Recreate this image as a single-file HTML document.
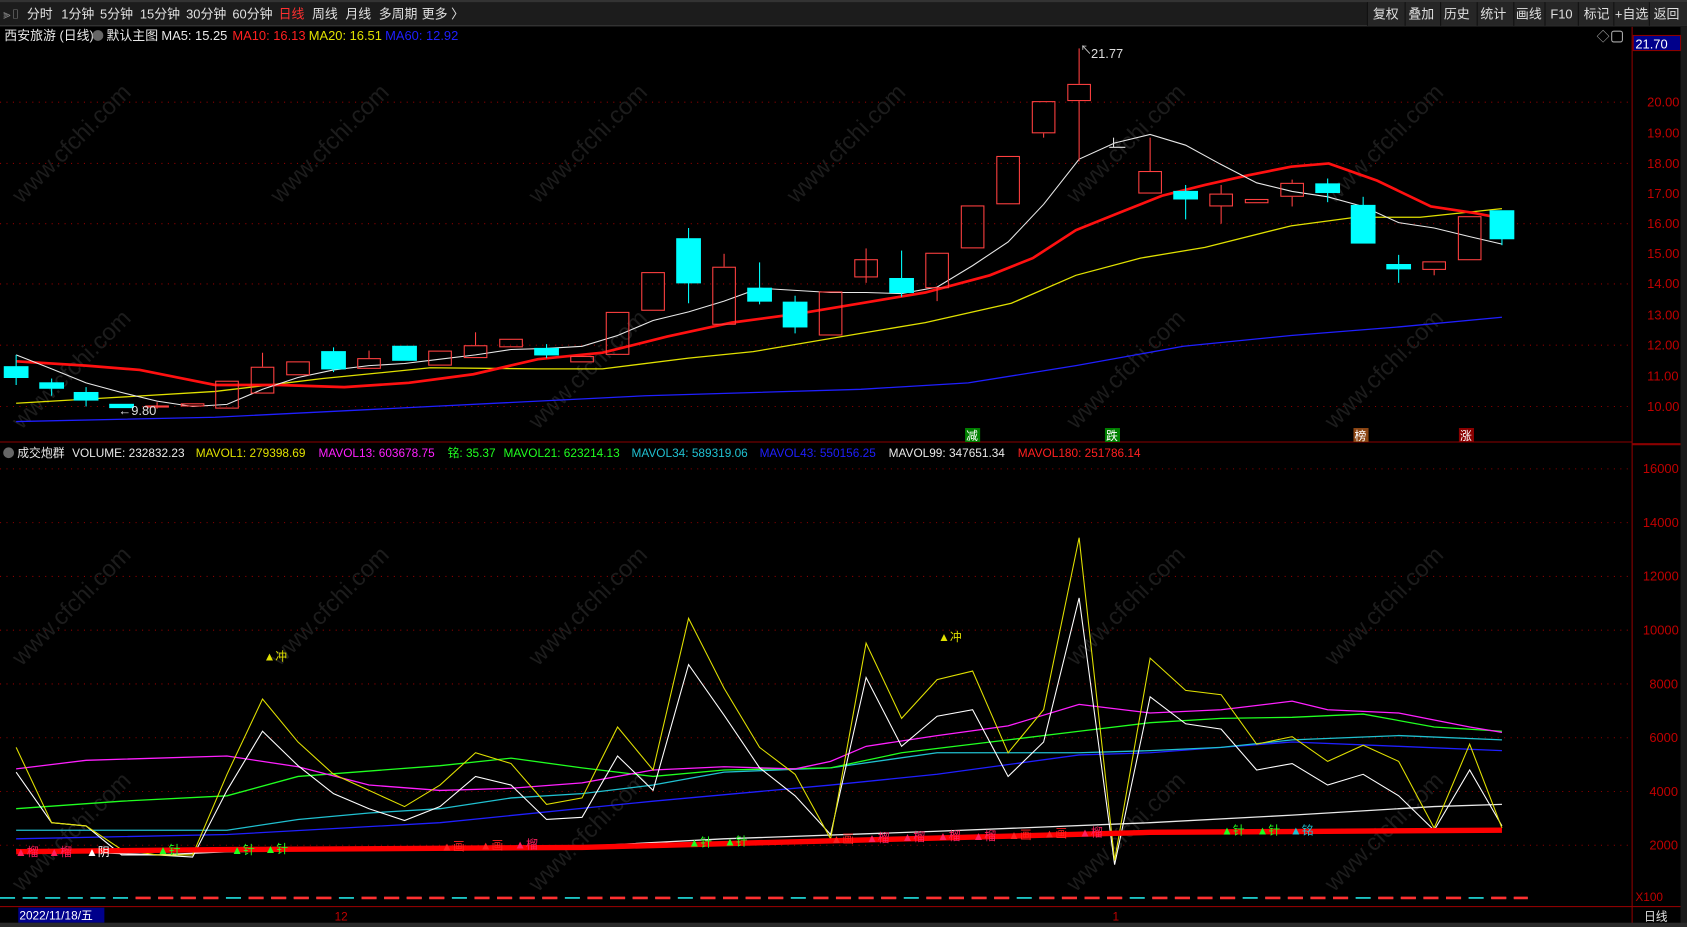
<!DOCTYPE html>
<html><head><meta charset="utf-8"><style>
html,body{margin:0;padding:0;background:#000;width:1687px;height:927px;overflow:hidden}
svg{display:block}
text{font-family:"Liberation Sans","Noto Sans CJK SC",sans-serif}
</style></head><body>
<svg width="1687" height="927" viewBox="0 0 1568 862" preserveAspectRatio="none" xmlns="http://www.w3.org/2000/svg">
<rect width="1568" height="862" fill="#000"/>
<rect x="0" y="0" width="1568" height="24" fill="#1c1c1c"/>
<rect x="0" y="0" width="1568" height="2" fill="#333"/>
<line x1="0" y1="24" x2="1568" y2="24" stroke="#3a3a3a"/>
<g font-size="12" fill="#e0e0e0">
<text x="3" y="17" fill="#888">⫸▯</text>
<text x="25" y="17">分时</text><text x="57" y="17">1分钟</text><text x="93" y="17">5分钟</text>
<text x="130" y="17">15分钟</text><text x="173" y="17">30分钟</text><text x="216" y="17">60分钟</text>
<text x="259" y="17" fill="#ff3030">日线</text><text x="290" y="17">周线</text><text x="321" y="17">月线</text>
<text x="352" y="17">多周期</text><text x="392" y="17">更多 〉</text>
</g>
<g font-size="12" fill="#e0e0e0">
<rect x="1271" y="2" width="297" height="22" fill="#262626"/>
<g stroke="#111"><line x1="1271" y1="2" x2="1271" y2="24"/><line x1="1306" y1="2" x2="1306" y2="24"/><line x1="1339" y1="2" x2="1339" y2="24"/><line x1="1373" y1="2" x2="1373" y2="24"/><line x1="1407" y1="2" x2="1407" y2="24"/><line x1="1436" y1="2" x2="1436" y2="24"/><line x1="1467" y1="2" x2="1467" y2="24"/><line x1="1500" y1="2" x2="1500" y2="24"/><line x1="1533" y1="2" x2="1533" y2="24"/></g>
<text x="1276" y="17">复权</text><text x="1309" y="17">叠加</text><text x="1342" y="17">历史</text><text x="1376" y="17">统计</text>
<text x="1409" y="17">画线</text><text x="1441" y="17">F10</text><text x="1472" y="17">标记</text><text x="1501" y="17">+自选</text><text x="1537" y="17">返回</text>
</g>
<g font-size="12">
<text x="4" y="37" fill="#e8e8e8">西安旅游 (日线)</text>
<circle cx="91" cy="33" r="5" fill="#666"/>
<text x="99" y="37" fill="#e8e8e8">默认主图</text>
<text x="150" y="37" fill="#e8e8e8">MA5: 15.25</text>
<text x="216" y="37" fill="#ff2020">MA10: 16.13</text>
<text x="287" y="37" fill="#e0e000">MA20: 16.51</text>
<text x="358" y="37" fill="#1f1fff">MA60: 12.92</text>
<text x="1484" y="38" fill="#aaa">◇</text>
<rect x="1498" y="29" width="10" height="10" fill="none" stroke="#aaa" rx="2"/>
</g>
<line x1="1517" y1="25" x2="1517" y2="862" stroke="#8b0000"/>
<rect x="1562" y="25" width="6" height="837" fill="#1a1a1a"/>
<line x1="0" y1="411" x2="1517" y2="411" stroke="#8b0000"/>
<line x1="1517" y1="413" x2="1562" y2="413" stroke="#8b0000" stroke-width="2"/>
<rect x="1518" y="33" width="44" height="14" fill="#00008b" stroke="#8b0000"/>
<text x="1520" y="45" font-size="12" fill="#fff">21.70</text>
<g font-size="12" fill="#c00000">
<text x="1531" y="99">20.00</text><text x="1531" y="128">19.00</text><text x="1531" y="156">18.00</text><text x="1531" y="184">17.00</text><text x="1531" y="212">16.00</text><text x="1531" y="240">15.00</text><text x="1531" y="268">14.00</text><text x="1531" y="297">13.00</text><text x="1531" y="325">12.00</text><text x="1531" y="354">11.00</text><text x="1531" y="382">10.00</text>
<text x="1527" y="440">16000</text><text x="1527" y="490">14000</text><text x="1527" y="540">12000</text><text x="1527" y="590">10000</text><text x="1533" y="640">8000</text><text x="1533" y="690">6000</text><text x="1533" y="740">4000</text><text x="1533" y="790">2000</text>
</g>
<g stroke="#8b0000" stroke-dasharray="1,5">
<line x1="0" y1="95" x2="1515" y2="95"/><line x1="0" y1="152" x2="1515" y2="152"/><line x1="0" y1="208" x2="1515" y2="208"/><line x1="0" y1="264" x2="1515" y2="264"/><line x1="0" y1="321" x2="1515" y2="321"/><line x1="0" y1="378" x2="1515" y2="378"/>
<line x1="0" y1="436" x2="1515" y2="436"/><line x1="0" y1="486" x2="1515" y2="486"/><line x1="0" y1="536" x2="1515" y2="536"/><line x1="0" y1="586" x2="1515" y2="586"/><line x1="0" y1="636" x2="1515" y2="636"/><line x1="0" y1="686" x2="1515" y2="686"/><line x1="0" y1="736" x2="1515" y2="736"/><line x1="0" y1="786" x2="1515" y2="786"/>
</g>
<g font-size="22" fill="#1c1c1c" font-family="Liberation Sans">
<text transform="translate(20,190) rotate(-45)">www.cfchi.com</text>
<text transform="translate(260,190) rotate(-45)">www.cfchi.com</text>
<text transform="translate(500,190) rotate(-45)">www.cfchi.com</text>
<text transform="translate(740,190) rotate(-45)">www.cfchi.com</text>
<text transform="translate(1000,190) rotate(-45)">www.cfchi.com</text>
<text transform="translate(1240,190) rotate(-45)">www.cfchi.com</text>
<text transform="translate(20,400) rotate(-45)">www.cfchi.com</text>
<text transform="translate(500,400) rotate(-45)">www.cfchi.com</text>
<text transform="translate(1000,400) rotate(-45)">www.cfchi.com</text>
<text transform="translate(1240,400) rotate(-45)">www.cfchi.com</text>
<text transform="translate(20,620) rotate(-45)">www.cfchi.com</text>
<text transform="translate(260,620) rotate(-45)">www.cfchi.com</text>
<text transform="translate(500,620) rotate(-45)">www.cfchi.com</text>
<text transform="translate(1000,620) rotate(-45)">www.cfchi.com</text>
<text transform="translate(1240,620) rotate(-45)">www.cfchi.com</text>
<text transform="translate(20,830) rotate(-45)">www.cfchi.com</text>
<text transform="translate(500,830) rotate(-45)">www.cfchi.com</text>
<text transform="translate(1000,830) rotate(-45)">www.cfchi.com</text>
<text transform="translate(1240,830) rotate(-45)">www.cfchi.com</text>
</g>
<polyline fill="none" stroke="#1f1fff" stroke-width="1.2" points="15,392 200,388 400,378 600,368 800,362 900,356 1000,340 1100,322 1200,312 1300,304 1396,295"/>
<polyline fill="none" stroke="#e0e000" stroke-width="1.2" points="15,375 100,370 200,364 300,352 400,342 500,343 560,343 640,333 700,327 800,310 860,300 940,282 1000,256 1060,240 1120,230 1200,210 1260,202 1320,202 1396,194"/>
<polyline fill="none" stroke="#ff1010" stroke-width="2.5" points="15,336 80,340 130,344 200,358 260,358 320,360 380,356 440,348 500,334 560,328 620,313 680,300 740,292 800,282 860,272 920,256 960,240 1000,214 1040,198 1080,182 1120,172 1160,163 1200,155 1235,152 1280,168 1330,192 1370,198 1396,203"/>
<polyline fill="none" stroke="#e8e8e8" stroke-width="1" points="15,330 48,343 80,356 113,365 146,373 179,378 211,376 244,362 277,351 310,344 343,340 376,338 409,334 442,330 475,325 508,324 541,322 574,312 607,298 640,290 673,280 706,268 739,270 772,272 805,272 838,273 871,267 904,247 937,225 970,190 1003,148 1036,133 1069,125 1102,135 1135,153 1168,170 1201,178 1234,183 1267,192 1300,207 1333,212 1366,220 1396,227"/>
<g stroke-width="1">
<g fill="#00ffff" stroke="#00ffff">
<line x1="15" y1="330" x2="15" y2="358"/><rect x="4" y="341" width="22" height="10"/>
<rect x="37" y="356" width="22" height="5"/><line x1="48" y1="352" x2="48" y2="368"/>
<line x1="80" y1="360" x2="80" y2="378"/><rect x="69" y="365" width="22" height="7"/>
<rect x="102" y="376" width="22" height="3"/>
<line x1="310" y1="323" x2="310" y2="346"/><rect x="299" y="327" width="22" height="16"/>
<rect x="365" y="322" width="22" height="13"/>
<rect x="497" y="324" width="22" height="6"/><line x1="508" y1="320" x2="508" y2="333"/>
<line x1="640" y1="212" x2="640" y2="282"/><rect x="629" y="222" width="22" height="41"/>
<line x1="706" y1="244" x2="706" y2="283"/><rect x="695" y="268" width="22" height="12"/>
<line x1="739" y1="275" x2="739" y2="310"/><rect x="728" y="281" width="22" height="23"/>
<line x1="838" y1="233" x2="838" y2="276"/><rect x="827" y="259" width="22" height="13"/>
<line x1="1102" y1="172" x2="1102" y2="204"/><rect x="1091" y="178" width="22" height="7"/>
<line x1="1234" y1="166" x2="1234" y2="188"/><rect x="1223" y="171" width="22" height="8"/>
<line x1="1267" y1="183" x2="1267" y2="226"/><rect x="1256" y="191" width="22" height="35"/>
<line x1="1300" y1="237" x2="1300" y2="263"/><rect x="1289" y="246" width="22" height="4"/>
<line x1="1396" y1="196" x2="1396" y2="228"/><rect x="1385" y="196" width="22" height="26"/>
</g>
<g fill="none" stroke="#ff4040">
<line x1="146" y1="374" x2="146" y2="380"/><rect x="135.5" y="377.5" width="21" height="1"/>
<rect x="168.5" y="375.5" width="21" height="2"/>
<rect x="200.5" y="354.5" width="21" height="25"/>
<line x1="244" y1="328" x2="244" y2="341"/><rect x="233.5" y="341.5" width="21" height="24"/>
<rect x="266.5" y="336.5" width="21" height="12"/>
<line x1="343" y1="326" x2="343" y2="333"/><rect x="332.5" y="333.5" width="21" height="9"/>
<rect x="398.5" y="326.5" width="21" height="13"/>
<line x1="442" y1="309" x2="442" y2="321"/><rect x="431.5" y="321.5" width="21" height="11"/>
<rect x="464.5" y="315.5" width="21" height="7"/>
<rect x="530.5" y="331.5" width="21" height="5"/>
<rect x="563.5" y="290.5" width="21" height="39"/>
<rect x="596.5" y="253.5" width="21" height="35"/>
<line x1="673" y1="236" x2="673" y2="248"/><rect x="662.5" y="248.5" width="21" height="53"/>
<rect x="761.5" y="271.5" width="21" height="40"/>
<line x1="805" y1="231" x2="805" y2="263"/><rect x="794.5" y="241.5" width="21" height="16"/>
<line x1="871" y1="268" x2="871" y2="280"/><rect x="860.5" y="235.5" width="21" height="32"/>
<rect x="893.5" y="191.5" width="21" height="39"/>
<rect x="926.5" y="145.5" width="21" height="44"/>
<line x1="970" y1="124" x2="970" y2="128"/><rect x="959.5" y="94.5" width="21" height="29"/>
<line x1="1003" y1="45" x2="1003" y2="78"/><line x1="1003" y1="94" x2="1003" y2="150"/><rect x="992.5" y="78.5" width="21" height="15"/>
<line x1="1069" y1="128" x2="1069" y2="159"/><rect x="1058.5" y="159.5" width="21" height="20"/>
<line x1="1135" y1="172" x2="1135" y2="180"/><line x1="1135" y1="192" x2="1135" y2="208"/><rect x="1124.5" y="180.5" width="21" height="11"/>
<rect x="1157.5" y="185.5" width="21" height="3"/>
<line x1="1201" y1="167" x2="1201" y2="170"/><line x1="1201" y1="183" x2="1201" y2="192"/><rect x="1190.5" y="170.5" width="21" height="12"/>
<line x1="1333" y1="251" x2="1333" y2="256"/><rect x="1322.5" y="243.5" width="21" height="7"/>
<rect x="1355.5" y="201.5" width="21" height="40"/>
</g>
<line x1="1031" y1="137" x2="1046" y2="137" stroke="#ddd"/><line x1="1035" y1="128" x2="1035" y2="137" stroke="#ddd"/>
</g>
<text x="1004" y="50" font-size="11" fill="#ccc">↖</text>
<text x="1014" y="54" font-size="12" fill="#ddd">21.77</text>
<text x="110" y="386" font-size="12" fill="#ddd">←9.80</text>
<g font-size="11" fill="#fff">
<rect x="897" y="398" width="14" height="13" fill="#008000"/><text x="898" y="409">减</text>
<rect x="1027" y="398" width="14" height="13" fill="#008000"/><text x="1028" y="409">跌</text>
<rect x="1258" y="398" width="14" height="13" fill="#8b4513"/><text x="1259" y="409">榜</text>
<rect x="1356" y="398" width="14" height="13" fill="#8b0000"/><text x="1357" y="409">涨</text>
</g>
<g font-size="11">
<circle cx="8" cy="421" r="5" fill="#666"/>
<text x="16" y="425" fill="#e8e8e8">成交炮群</text>
<text x="67" y="425" fill="#e8e8e8">VOLUME: 232832.23</text>
<text x="182" y="425" fill="#e0e000">MAVOL1: 279398.69</text>
<text x="296" y="425" fill="#ff20ff">MAVOL13: 603678.75</text>
<text x="416" y="425" fill="#20ff20">铭: 35.37</text>
<text x="468" y="425" fill="#20ff20">MAVOL21: 623214.13</text>
<text x="587" y="425" fill="#20c0d0">MAVOL34: 589319.06</text>
<text x="706" y="425" fill="#1f1fff">MAVOL43: 550156.25</text>
<text x="826" y="425" fill="#e8e8e8">MAVOL99: 347651.34</text>
<text x="946" y="425" fill="#ff2020">MAVOL180: 251786.14</text>
</g>
<polyline fill="none" stroke="#1f1fff" stroke-width="1.2" points="15,780 211,776 409,765 607,745 772,730 871,720 1003,702 1069,700 1201,690 1300,694 1396,698"/>
<polyline fill="none" stroke="#20c0d0" stroke-width="1.2" points="15,772 211,772 277,762 343,756 409,752 475,742 541,738 607,730 673,718 772,714 871,700 1003,700 1069,698 1135,695 1201,688 1300,684 1396,688"/>
<polyline fill="none" stroke="#20ff20" stroke-width="1.2" points="15,752 113,745 211,740 277,722 343,717 409,712 475,705 541,714 607,722 673,716 772,714 838,700 937,688 1003,680 1069,672 1135,668 1201,667 1267,664 1333,676 1396,680"/>
<polyline fill="none" stroke="#ff20ff" stroke-width="1.2" points="15,715 80,707 211,703 277,713 343,730 409,735 475,733 541,728 607,716 673,713 739,715 772,708 805,694 871,684 937,675 1003,655 1069,663 1135,660 1201,652 1234,660 1300,663 1366,676 1396,681"/>
<polyline fill="none" stroke="#e8e8e8" stroke-width="1.2" points="15,790 146,795 211,792 541,787 673,780 871,773 1069,765 1201,758 1333,750 1396,748"/>
<polyline fill="none" stroke="#ffffff" stroke-width="1" points="15,718 48,765 80,768 113,795 146,795 179,797 211,735 244,680 277,712 310,738 343,752 376,763 409,750 442,722 475,730 508,762 541,760 574,703 607,735 640,618 673,665 706,714 739,740 772,776 805,630 838,694 871,666 904,660 937,722 970,690 1003,556 1036,804 1069,648 1102,673 1135,678 1168,716 1201,710 1234,730 1267,720 1300,740 1333,772 1366,716 1396,768"/>
<polyline fill="none" stroke="#e0e000" stroke-width="1" points="15,695 48,765 80,768 113,790 146,795 179,795 211,720 244,650 277,690 310,720 343,735 376,750 409,730 442,700 475,710 508,748 541,742 574,676 607,716 640,575 673,640 706,695 739,720 772,780 805,598 838,668 871,632 904,624 937,700 970,660 1003,500 1036,800 1069,612 1102,642 1135,646 1168,692 1201,685 1234,708 1267,693 1300,708 1333,770 1366,692 1396,770"/>
<polyline fill="none" stroke="#ff0000" stroke-width="5" points="15,792 211,790 541,788 805,781 1069,774 1396,772"/>
<g font-size="11">
<text x="14" y="796" fill="#ff2060">▲榴</text><text x="45" y="796" fill="#ff2060">▲榴</text><text x="80" y="796" fill="#fff">▲阴</text>
<text x="146" y="794" fill="#20ff20">▲针</text><text x="215" y="794" fill="#20ff20">▲针</text><text x="246" y="793" fill="#20ff20">▲针</text>
<text x="410" y="791" fill="#ff2020">▲画</text><text x="446" y="790" fill="#ff2020">▲画</text><text x="478" y="789" fill="#ff2060">▲榴</text>
<text x="640" y="787" fill="#20ff20">▲针</text><text x="673" y="786" fill="#20ff20">▲针</text>
<text x="772" y="784" fill="#ff2020">▲画</text><text x="805" y="783" fill="#ff2060">▲榴</text><text x="838" y="782" fill="#ff2060">▲榴</text><text x="871" y="781" fill="#ff2060">▲榴</text><text x="904" y="781" fill="#ff2060">▲榴</text><text x="937" y="780" fill="#ff2020">▲画</text><text x="970" y="779" fill="#ff2020">▲画</text><text x="1003" y="778" fill="#ff2060">▲榴</text>
<text x="1135" y="776" fill="#20ff20">▲针</text><text x="1168" y="776" fill="#20ff20">▲针</text><text x="1199" y="776" fill="#20c0d0">▲铭</text>
<text x="245" y="614" fill="#e0e000">▲冲</text><text x="872" y="596" fill="#e0e000">▲冲</text>
</g>
<line x1="0" y1="835" x2="1420" y2="835" stroke="#20e0e0" stroke-width="1.5" stroke-dasharray="14,7"/>
<line x1="126" y1="835" x2="1420" y2="835" stroke="#ff3030" stroke-width="2.5" stroke-dasharray="14,7,14,7,14,7,14,7,0,21"/>
<rect x="1518" y="826" width="44" height="16" fill="#000"/>
<text x="1520" y="838" font-size="11" fill="#c00000">X100</text>
<line x1="0" y1="843" x2="1562" y2="843" stroke="#8b0000"/>
<rect x="17" y="844" width="80" height="14" fill="#00008b"/>
<text x="18" y="855" font-size="11" fill="#fff">2022/11/18/五</text>
<text x="311" y="856" font-size="11" fill="#c00000">12</text>
<text x="1034" y="856" font-size="11" fill="#c00000">1</text>
<text x="1528" y="856" font-size="11" fill="#e0e0e0">日线</text>
<rect x="0" y="858" width="1568" height="4" fill="#2a2a2a"/>
</svg>
</body></html>
